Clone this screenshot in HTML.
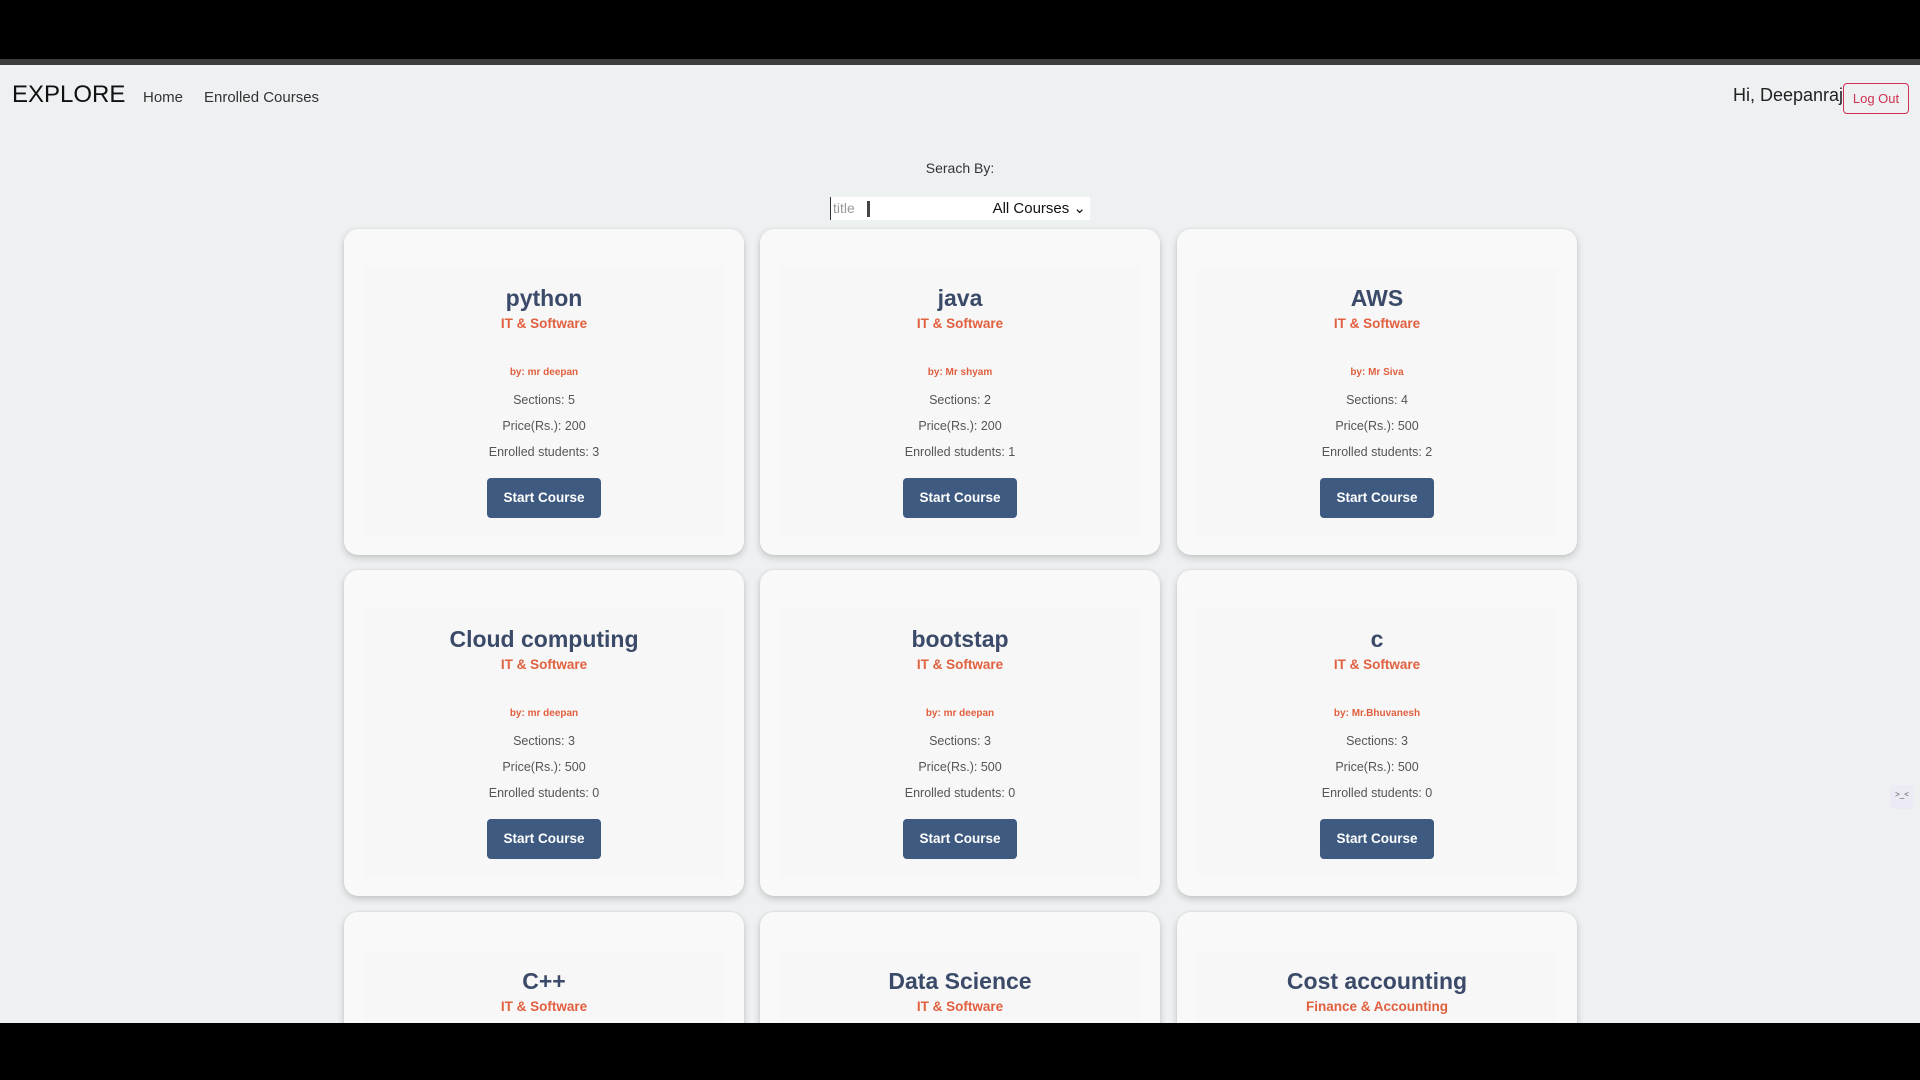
<!DOCTYPE html>
<html style="width:1920px;height:1080px;overflow:hidden"><head><style>
*{margin:0;padding:0;box-sizing:border-box}
body{width:1920px;height:1080px;position:relative;overflow:hidden;background:#eef1f2;font-family:"Liberation Sans",sans-serif}
.abs{position:absolute}
.clip{position:absolute;left:0;top:0;width:1920px;height:1023px;overflow:hidden}
.card{position:absolute;width:400px;height:326px;background:#f9f9f9;border-radius:14px;box-shadow:0 3px 8px rgba(0,0,0,.18),0 0 2px rgba(0,0,0,.08);overflow:hidden}
.inner{position:absolute;left:20px;top:39px;right:20px;bottom:20px;background:#f7f7f7}
.t{position:absolute;left:0;right:0;text-align:center}
.title{top:54px;font-size:23px;font-weight:bold;color:#3a4a68;line-height:30px}
.cat{top:86px;font-size:13.5px;font-weight:bold;color:#e0603f;line-height:18px}
.by{top:138px;font-size:10px;font-weight:bold;color:#e0603f;line-height:12px}
.l{font-size:12.5px;color:#555;line-height:16px}
.btn{position:absolute;left:143px;top:249px;width:114px;height:40px;background:#3e5a80;border-radius:4px;color:#fff;font-weight:bold;font-size:13.5px;text-align:center;line-height:40px}
</style></head><body>
<div class="clip">
<div class="abs" style="left:0;top:0;width:1920px;height:59px;background:#000"></div>
<div class="abs" style="left:0;top:59px;width:1920px;height:6px;background:#3c3c3c"></div>
<div class="abs" style="left:12px;top:81px;font-size:24px;color:#111">EXPLORE</div>
<div class="abs" style="left:143px;top:89px;font-size:15px;color:#333">Home</div>
<div class="abs" style="left:204px;top:89px;font-size:15px;color:#333">Enrolled Courses</div>
<div class="abs" style="left:1733px;top:85px;font-size:18px;color:#222">Hi, Deepanraj</div>
<div class="abs" style="left:1843px;top:83px;width:66px;height:31px;border:1px solid #d03050;border-radius:4px;color:#d03050;font-size:13px;text-align:center;line-height:29px;background:#eef1f2">Log Out</div>
<div class="abs" style="left:0;width:1920px;top:160px;text-align:center;font-size:14px;color:#333">Serach By:</div>
<div class="abs" style="left:830px;top:197px;width:160px;height:23px;background:#fff;border-left:1px solid #333;font-size:14px;color:#999;line-height:23px;padding-left:2px">title <span style="display:inline-block;width:3px;height:16px;background:#444;vertical-align:middle;margin-left:8px"></span></div>
<div class="abs" style="left:990px;top:197px;width:100px;height:23px;background:#fff;font-size:15px;color:#111;line-height:23px;text-align:right;padding-right:4px">All Courses &#8964;</div>

<div class="card" style="left:344px;top:229px"><div class="inner"></div><div class="t title">python</div><div class="t cat">IT &amp; Software</div><div class="t by">by: mr deepan</div><div class="t l" style="top:163px">Sections: 5</div><div class="t l" style="top:189px">Price(Rs.): 200</div><div class="t l" style="top:215px">Enrolled students: 3</div><div class="btn">Start Course</div></div>
<div class="card" style="left:760px;top:229px"><div class="inner"></div><div class="t title">java</div><div class="t cat">IT &amp; Software</div><div class="t by">by: Mr shyam</div><div class="t l" style="top:163px">Sections: 2</div><div class="t l" style="top:189px">Price(Rs.): 200</div><div class="t l" style="top:215px">Enrolled students: 1</div><div class="btn">Start Course</div></div>
<div class="card" style="left:1177px;top:229px"><div class="inner"></div><div class="t title">AWS</div><div class="t cat">IT &amp; Software</div><div class="t by">by: Mr Siva</div><div class="t l" style="top:163px">Sections: 4</div><div class="t l" style="top:189px">Price(Rs.): 500</div><div class="t l" style="top:215px">Enrolled students: 2</div><div class="btn">Start Course</div></div>

<div class="card" style="left:344px;top:570px"><div class="inner"></div><div class="t title">Cloud computing</div><div class="t cat">IT &amp; Software</div><div class="t by">by: mr deepan</div><div class="t l" style="top:163px">Sections: 3</div><div class="t l" style="top:189px">Price(Rs.): 500</div><div class="t l" style="top:215px">Enrolled students: 0</div><div class="btn">Start Course</div></div>
<div class="card" style="left:760px;top:570px"><div class="inner"></div><div class="t title">bootstap</div><div class="t cat">IT &amp; Software</div><div class="t by">by: mr deepan</div><div class="t l" style="top:163px">Sections: 3</div><div class="t l" style="top:189px">Price(Rs.): 500</div><div class="t l" style="top:215px">Enrolled students: 0</div><div class="btn">Start Course</div></div>
<div class="card" style="left:1177px;top:570px"><div class="inner"></div><div class="t title">c</div><div class="t cat">IT &amp; Software</div><div class="t by">by: Mr.Bhuvanesh</div><div class="t l" style="top:163px">Sections: 3</div><div class="t l" style="top:189px">Price(Rs.): 500</div><div class="t l" style="top:215px">Enrolled students: 0</div><div class="btn">Start Course</div></div>

<div class="card" style="left:344px;top:912px"><div class="inner"></div><div class="t title">C++</div><div class="t cat">IT &amp; Software</div></div>
<div class="card" style="left:760px;top:912px"><div class="inner"></div><div class="t title">Data Science</div><div class="t cat">IT &amp; Software</div></div>
<div class="card" style="left:1177px;top:912px"><div class="inner"></div><div class="t title">Cost accounting</div><div class="t cat">Finance &amp; Accounting</div></div>

<div class="abs" style="left:1890px;top:785px;width:24px;height:24px;background:#eceaf4;border-radius:4px;font-size:8px;color:#555;text-align:center;line-height:20px">&gt;_&lt;</div>
</div>
<div class="abs" style="left:0;top:1023px;width:1920px;height:57px;background:#000"></div>
</body></html>
